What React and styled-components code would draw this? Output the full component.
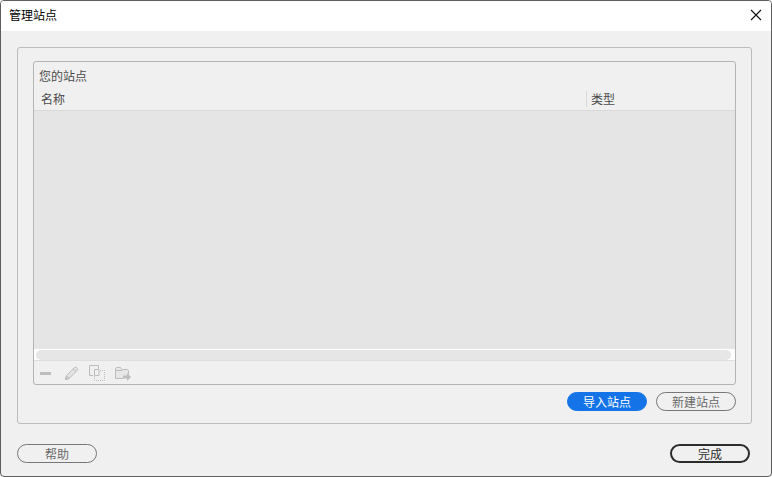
import React from "react";
import styled, { createGlobalStyle, css } from "styled-components";

const GlobalStyle = createGlobalStyle`
  *, *::before, *::after { box-sizing: border-box; }
  body {
    margin: 0;
    background: #f4f4f4;
    font: 12px/16px "Noto Sans CJK SC", "Liberation Sans", sans-serif;
    color: #4a4a4a;
  }
  button { font: inherit; color: inherit; }
`;

const Dialog = styled.main`
  display: flex;
  flex-direction: column;
  min-height: 100vh;
  border: 1px solid #5e5e5e;
  border-radius: 4px;
  overflow: hidden;
  background: #f0f0f0;
`;

const TitleBar = styled.header`
  display: flex;
  align-items: center;
  justify-content: space-between;
  height: 30px;
  padding: 0 9px 2px 8px;
  background: #fff;
`;

const Title = styled.h1`
  margin: 0;
  font-size: 12px;
  font-weight: 400;
  color: #000;
`;

const CloseButton = styled.button`
  display: flex;
  padding: 0;
  border: 0;
  background: none;
  color: #111;
`;

const Group = styled.section`
  display: flex;
  flex: 1;
  flex-direction: column;
  margin: 16px 19px 0 16px;
  padding: 13px 15px 12px;
  border: 1px solid #bcbcbc;
  border-radius: 3px;
`;

const Panel = styled.section`
  display: flex;
  flex: 1;
  flex-direction: column;
  border: 1px solid #b4b4b4;
  border-radius: 3px;
`;

const PanelTitle = styled.h2`
  margin: 0;
  padding: 6px 5px 5px;
  font-size: 12px;
  font-weight: 400;
`;

const SiteList = styled.div`
  flex: 1;
  background: #e5e5e5;
`;

const SiteTable = styled.table`
  width: 100%;
  table-layout: fixed;
  border-collapse: collapse;
  background: #f0f0f0;
`;

const HeadRow = styled.tr`
  height: 21px;
  border-bottom: 1px solid #d9d9d9;
`;

const HeadCell = styled.th`
  width: ${({ $width }) => $width || "auto"};
  padding: 0;
  text-align: left;
  font-weight: 400;
`;

const HeadLabel = styled.div`
  padding-left: ${({ $divided }) => ($divided ? 4 : 7)}px;
  border-left: ${({ $divided }) => ($divided ? "1px solid #d8d8d8" : "0")};
`;

const ScrollTrack = styled.div`
  padding: 1px 4px 0 2px;
  background: #fff;
  border-bottom: 1px solid #dedede;
`;

const ScrollThumb = styled.div`
  height: 10px;
  border-radius: 5px;
  background: #e6e6e6;
`;

const Toolbar = styled.div`
  display: flex;
  align-items: center;
  gap: 8px;
  height: 23px;
  padding: 0 2px;
`;

const ToolButton = styled.button`
  display: flex;
  padding: 0;
  border: 0;
  background: none;
  color: #bdbdbd;
`;

const Actions = styled.div`
  display: flex;
  justify-content: flex-end;
  gap: 9px;
  padding-top: 7px;
`;

const Footer = styled.footer`
  display: flex;
  justify-content: space-between;
  padding: 20px 21px 13px 16px;
`;

const variants = {
  outline: css`
    border: 1px solid #777;
    color: #6a6a6a;
  `,
  primary: css`
    border: 1px solid #1473e6;
    background: #1473e6;
    color: #fff;
  `,
  strong: css`
    border: 2px solid #2c2c2c;
    color: #2c2c2c;
  `,
};

const PillButton = styled.button`
  display: flex;
  align-items: center;
  justify-content: center;
  width: 80px;
  height: 19px;
  padding: 0;
  border-radius: 10px;
  background: none;
  ${({ $variant }) => variants[$variant || "outline"]}
`;

const CloseIcon = () => (
  <svg width="12" height="12" viewBox="0 0 12 12" stroke="currentColor" fill="none" aria-hidden="true">
    <path d="M1 1l10 10M11 1L1 11" strokeWidth="1.1" />
  </svg>
);

const RemoveIcon = () => (
  <svg width="18" height="18" viewBox="0 0 18 18" fill="currentColor" aria-hidden="true">
    <rect x="4" y="8" width="11" height="3" rx="0.5" />
  </svg>
);

const EditIcon = () => (
  <svg width="18" height="18" viewBox="0 0 18 18" fill="none" stroke="currentColor" aria-hidden="true">
    <path d="M3.5 15.5l1-4 8.2-8.2q.8-.6 1.5 0l1.3 1.3q.6.7 0 1.4L7.3 14.3z" fill="#e2e2e2" />
    <path d="M11.2 4.8l2.9 2.9M4.500 11.500l2.8 2.8" />
    <path d="M3.500 15.500l.6-2.4 1.8 1.8z" fill="currentColor" />
  </svg>
);

const DuplicateIcon = () => (
  <svg width="18" height="18" viewBox="0 0 18 18" fill="none" stroke="currentColor" aria-hidden="true">
    <path d="M5 11.500H1.500V1.500h9v4M10.500 5.500h-4v6h4.500v-6" />
    <path d="M12 6.500h4.500v10h-10v-5" strokeDasharray="1 1" />
  </svg>
);

const ExportIcon = () => (
  <svg width="18" height="18" viewBox="0 0 18 18" fill="none" stroke="currentColor" aria-hidden="true">
    <path d="M9 14.500H1.500v-10l1-1h4l1.500 2h5.500l1 1v4" fill="#e6e6e6" />
    <path d="M1.500 6.500H8l1-1" />
    <path d="M9 11.500h4V9l4 4-4 4v-2.500H9z" fill="currentColor" stroke="none" />
  </svg>
);

const tools = [
  { label: "删除站点", Icon: RemoveIcon },
  { label: "编辑站点", Icon: EditIcon },
  { label: "复制站点", Icon: DuplicateIcon },
  { label: "导出站点", Icon: ExportIcon },
];

export default function App() {
  return (
    <>
      <GlobalStyle />
      <Dialog>
        <TitleBar>
          <Title>管理站点</Title>
          <CloseButton type="button" aria-label="关闭">
            <CloseIcon />
          </CloseButton>
        </TitleBar>
        <Group>
          <Panel aria-labelledby="sites-title">
            <PanelTitle id="sites-title">您的站点</PanelTitle>
            <SiteList>
              <SiteTable aria-labelledby="sites-title">
                <thead>
                  <HeadRow>
                    <HeadCell scope="col">
                      <HeadLabel>名称</HeadLabel>
                    </HeadCell>
                    <HeadCell scope="col" $width="149px">
                      <HeadLabel $divided>类型</HeadLabel>
                    </HeadCell>
                  </HeadRow>
                </thead>
                <tbody />
              </SiteTable>
            </SiteList>
            <ScrollTrack>
              <ScrollThumb />
            </ScrollTrack>
            <Toolbar>
              {tools.map(({ label, Icon }) => (
                <ToolButton key={label} type="button" aria-label={label} disabled>
                  <Icon />
                </ToolButton>
              ))}
            </Toolbar>
          </Panel>
          <Actions>
            <PillButton type="button" $variant="primary">导入站点</PillButton>
            <PillButton type="button">新建站点</PillButton>
          </Actions>
        </Group>
        <Footer>
          <PillButton type="button">帮助</PillButton>
          <PillButton type="button" $variant="strong">完成</PillButton>
        </Footer>
      </Dialog>
    </>
  );
}
